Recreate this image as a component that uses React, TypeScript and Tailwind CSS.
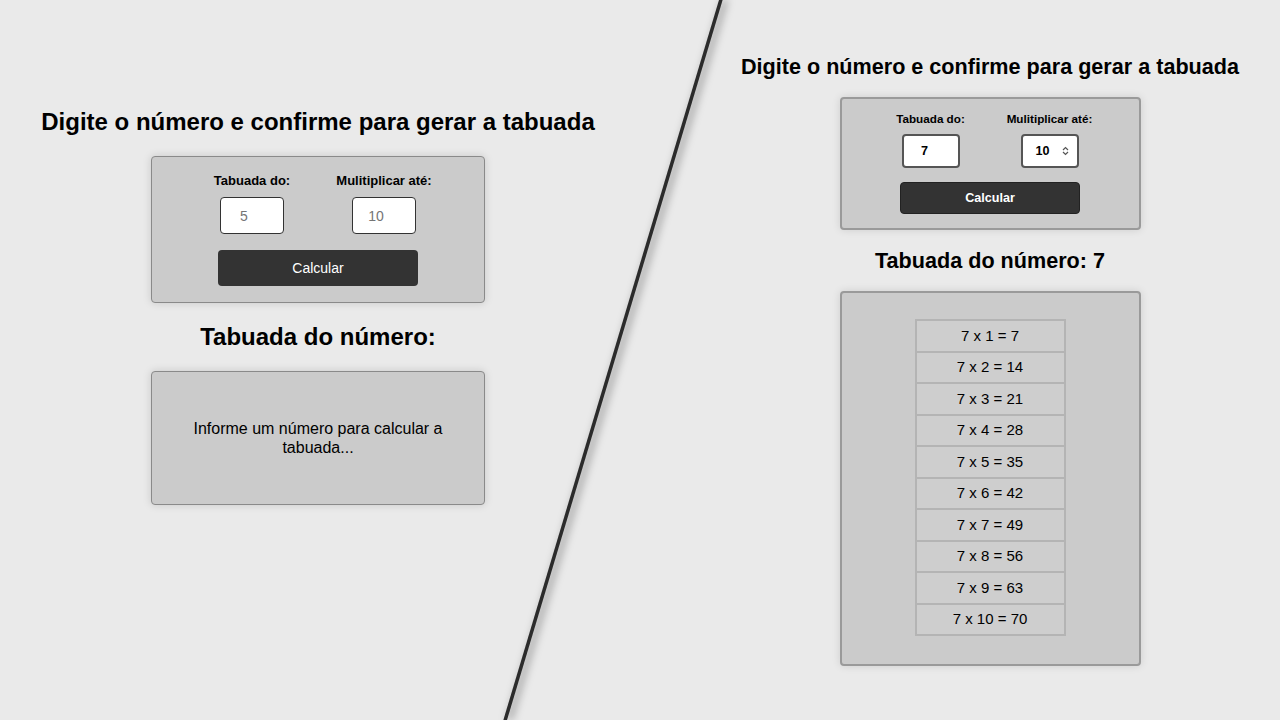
import React from "react";

const rows = [1, 2, 3, 4, 5, 6, 7, 8, 9, 10];

const Spinner = () => (
  <svg width="7" height="10" viewBox="0 0 7 10" className="absolute right-[10px] top-1/2 -translate-y-1/2">
    <path d="M1 4 L3.5 1.5 L6 4" fill="none" stroke="#555" strokeWidth="1.2" />
    <path d="M1 6 L3.5 8.5 L6 6" fill="none" stroke="#555" strokeWidth="1.2" />
  </svg>
);

const EmptyState = () => {
  return (
    <div className="w-[636px] flex flex-col items-center pt-[108px]">
      <h1 className="text-[24px] leading-[28px] font-bold text-black">
        Digite o número e confirme para gerar a tabuada
      </h1>
      <div className="mt-[20px] w-[334px] bg-[#cbcbcb] border border-[#8a8a8a] rounded-[4px] shadow-[0_0_8px_rgba(0,0,0,0.15)] flex flex-col items-center pt-[16px] pb-[16px]">
        <div className="flex gap-[22px]">
          <div className="w-[110px] flex flex-col items-center">
            <label className="text-[13px] leading-[16px] font-bold text-black mb-[8px]">Tabuada do:</label>
            <input
              readOnly
              placeholder="5"
              className="w-[64px] h-[37px] bg-white border border-[#333] rounded-[4px] text-center pr-[16px] text-[14px] placeholder:text-[#757575] outline-none"
            />
          </div>
          <div className="w-[110px] flex flex-col items-center">
            <label className="text-[13px] leading-[16px] font-bold text-black mb-[8px]">Mulitiplicar até:</label>
            <input
              readOnly
              placeholder="10"
              className="w-[64px] h-[37px] bg-white border border-[#333] rounded-[4px] text-center pr-[16px] text-[14px] placeholder:text-[#757575] outline-none"
            />
          </div>
        </div>
        <button className="mt-[16px] w-[200px] h-[36px] bg-[#333333] rounded-[4px] text-white text-[14px]">
          Calcular
        </button>
      </div>
      <h2 className="mt-[20px] text-[24px] leading-[28px] font-bold text-black">Tabuada do número:</h2>
      <div className="mt-[20px] w-[334px] h-[134px] bg-[#cbcbcb] border border-[#8a8a8a] rounded-[4px] shadow-[0_0_8px_rgba(0,0,0,0.15)] flex items-center justify-center px-[40px]">
        <p className="text-[16px] leading-[19px] text-black text-center">
          Informe um número para calcular a tabuada...
        </p>
      </div>
    </div>
  );
};

const ResultState = () => {
  return (
    <div className="w-[580px] ml-auto flex flex-col items-center pt-[54px]">
      <h1 className="text-[21.6px] leading-[25px] font-bold text-black">
        Digite o número e confirme para gerar a tabuada
      </h1>
      <div className="mt-[18px] w-[301px] bg-[#cbcbcb] border-2 border-[#9a9a9a] rounded-[4px] shadow-[0_0_8px_rgba(0,0,0,0.12)] flex flex-col items-center pt-[13px] pb-[14px]">
        <div className="flex gap-[20px]">
          <div className="w-[99px] flex flex-col items-center">
            <label className="text-[11.7px] leading-[14px] font-bold text-black mb-[8px]">Tabuada do:</label>
            <input
              readOnly
              defaultValue="7"
              className="w-[58px] h-[34px] bg-white border-2 border-[#555] rounded-[4px] text-center pr-[12px] text-[12.6px] font-bold text-black outline-none"
            />
          </div>
          <div className="w-[99px] flex flex-col items-center">
            <label className="text-[11.7px] leading-[14px] font-bold text-black mb-[8px]">Mulitiplicar até:</label>
            <div className="relative">
              <input
                readOnly
                defaultValue="10"
                className="w-[58px] h-[34px] bg-white border-2 border-[#555] rounded-[4px] text-center pr-[14px] text-[12.6px] font-bold text-black outline-none"
              />
              <Spinner />
            </div>
          </div>
        </div>
        <button className="mt-[14px] w-[180px] h-[32px] bg-[#333333] border border-[#222] rounded-[4px] text-white text-[12.6px] font-bold">
          Calcular
        </button>
      </div>
      <h2 className="mt-[18px] text-[21.6px] leading-[25px] font-bold text-black">Tabuada do número: 7</h2>
      <div className="mt-[18px] w-[301px] h-[375px] bg-[#cbcbcb] border-2 border-[#9a9a9a] rounded-[4px] shadow-[0_0_8px_rgba(0,0,0,0.12)] flex flex-col items-center pt-[26px]">
        <div className="w-[151px] border-x-2 border-t-2 border-[#b4b4b4]">
          {rows.map((n) => (
            <div
              key={n}
              className="h-[31.5px] flex items-center justify-center border-b-2 border-[#b4b4b4] bg-[#cecece] text-[15px] text-black"
            >
              7 x {n} = {7 * n}
            </div>
          ))}
        </div>
      </div>
    </div>
  );
};

export default function App() {
  return (
    <div className="relative w-[1280px] h-[720px] overflow-hidden bg-[#eaeaea] flex font-['Liberation_Sans',Arial,sans-serif]">
      <EmptyState />
      <ResultState />
      <svg
        width="1280"
        height="720"
        className="absolute inset-0 pointer-events-none drop-shadow-[4px_0_4px_rgba(0,0,0,0.5)]"
      >
        <line x1="722" y1="-4" x2="504" y2="724" stroke="#2b2b2b" strokeWidth="3.5" />
      </svg>
    </div>
  );
}
